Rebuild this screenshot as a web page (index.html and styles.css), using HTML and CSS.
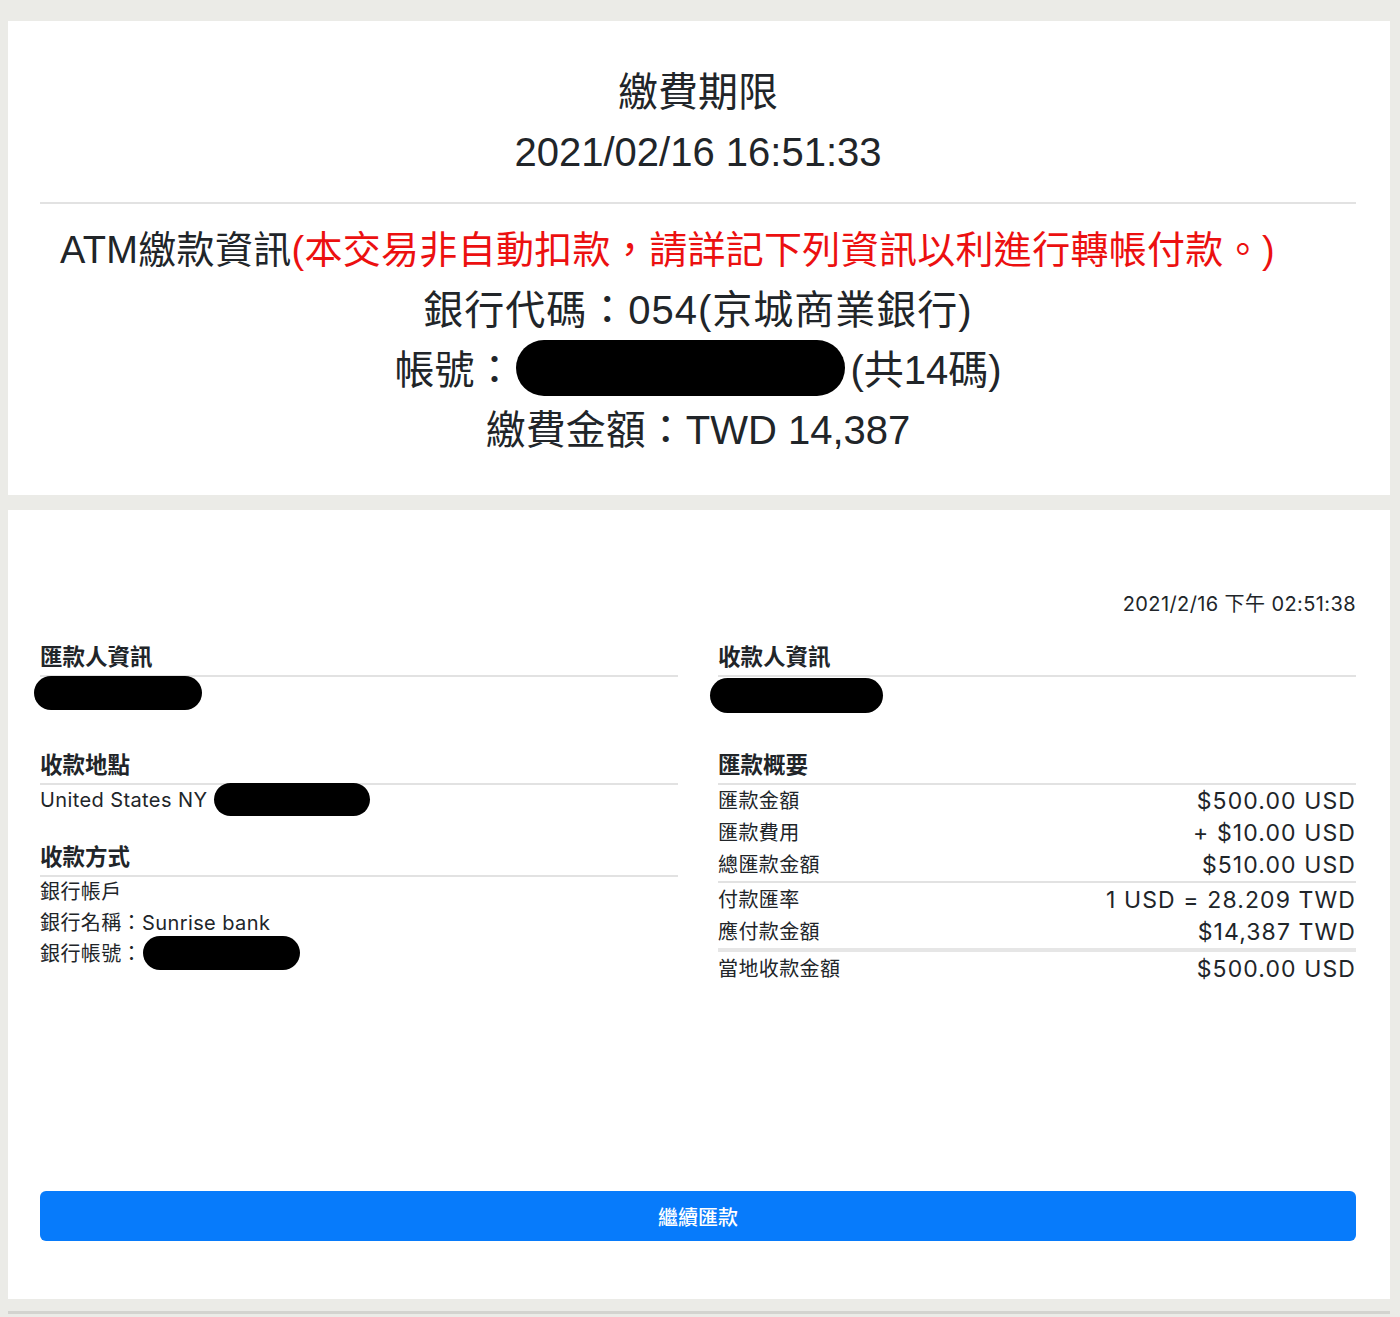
FILE: index.html
```html
<!DOCTYPE html>
<html lang="zh-Hant">
<head>
<meta charset="utf-8">
<title>繳費資訊</title>
<link rel="stylesheet" href="styles.css">
</head>
<body>
<div class="page">
  <section class="card card-top">
    <div class="line">繳費期限</div>
    <div class="line">2021/02/16 16:51:33</div>
    <hr class="divider">
    <div class="atm-title">ATM繳款資訊<span class="warn">(本交易非自動扣款，請詳記下列資訊以利進行轉帳付款。)</span></div>
    <div class="line line-wide">銀行代碼：054(京城商業銀行)</div>
    <div class="line line-flex">帳號：<span class="redact redact-lg"></span>(共14碼)</div>
    <div class="line">繳費金額：TWD 14,387</div>
  </section>

  <section class="card card-receipt">
    <div class="stamp">2021/2/16 下午 02:51:38</div>
    <div class="cols">
      <div class="col">
        <div class="sec">
          <h3 class="sec-title">匯款人資訊</h3>
          <div class="row row-redact"><span class="redact r-sender"></span></div>
        </div>
        <div class="sec sec-next">
          <h3 class="sec-title">收款地點</h3>
          <div class="row row-redact">United States NY<span class="redact r-place"></span></div>
        </div>
        <div class="sec sec-method">
          <h3 class="sec-title">收款方式</h3>
          <div class="row">銀行帳戶</div>
          <div class="row">銀行名稱：Sunrise bank</div>
          <div class="row row-redact">銀行帳號：<span class="redact r-acct"></span></div>
        </div>
      </div>
      <div class="col">
        <div class="sec">
          <h3 class="sec-title">收款人資訊</h3>
          <div class="row row-redact"><span class="redact r-recv"></span></div>
        </div>
        <div class="sec sec-next">
          <h3 class="sec-title">匯款概要</h3>
          <div class="kv"><span class="k">匯款金額</span><span class="v">$500.00 USD</span></div>
          <div class="kv"><span class="k">匯款費用</span><span class="v">+ $10.00 USD</span></div>
          <div class="kv"><span class="k">總匯款金額</span><span class="v">$510.00 USD</span></div>
          <div class="kv kv-sep"><span class="k">付款匯率</span><span class="v">1 USD = 28.209 TWD</span></div>
          <div class="kv"><span class="k">應付款金額</span><span class="v">$14,387 TWD</span></div>
          <div class="kv kv-sep-thick"><span class="k">當地收款金額</span><span class="v">$500.00 USD</span></div>
        </div>
      </div>
    </div>
    <button class="btn-primary" type="button">繼續匯款</button>
  </section>
  <div class="bottom-rule"></div>
</div>
</body>
</html>
```

FILE: styles.css
```css
* { box-sizing: border-box; }

html, body {
  margin: 0;
  padding: 0;
  background: #ebebe7;
}

body {
  font-family: "Liberation Sans", "Noto Sans CJK TC", sans-serif;
  color: #212529;
}

.page {
  width: 1400px;
  height: 1317px;
  padding-top: 21px;
  overflow: hidden;
}

.card {
  width: 1382px;
  margin-left: 8px;
  background: #ffffff;
}

/* ---------- top card ---------- */
.card-top {
  padding: 41px 34px 35px 32px;
  text-align: center;
}

.line {
  font-size: 40px;
  line-height: 60px;
  height: 60px;
  white-space: nowrap;
}

.line-wide { letter-spacing: 1px; }

.line-flex {
  display: flex;
  justify-content: center;
  align-items: center;
}

.divider {
  border: 0;
  height: 2px;
  background: #e2e2e2;
  margin: 20px 0 16px;
}

.atm-title {
  font-size: 38px;
  line-height: 60px;
  height: 60px;
  text-align: left;
  padding-left: 20px;
  letter-spacing: 0.3px;
  white-space: nowrap;
}

.warn { color: #ec1010; }

.redact {
  display: inline-block;
  background: #000;
  border-radius: 999px;
  flex: none;
}

.redact-lg {
  width: 329px;
  height: 56px;
  margin: -4px 5px 0 2px;
}

/* ---------- receipt card ---------- */
.card-receipt {
  margin-top: 15px;
  padding: 79px 34px 58px 32px;
  font-family: Inter, "Noto Sans CJK TC", sans-serif;
}

.stamp {
  text-align: right;
  font-size: 20px;
  line-height: 30px;
  letter-spacing: 0.4px;
}

.cols {
  margin-top: 21px;
  display: grid;
  grid-template-columns: 1fr 1fr;
  column-gap: 40px;
}

.sec-title {
  margin: 0;
  font-size: 22.5px;
  font-weight: 700;
  line-height: 30px;
  padding-bottom: 5px;
  border-bottom: 2px solid #e2e2e2;
  font-family: "Noto Sans CJK TC", sans-serif;
}

.sec-next { margin-top: 40px; }
.sec-method { margin-top: 24px; }

.row {
  font-size: 20px;
  line-height: 31px;
  height: 31px;
  letter-spacing: 0.4px;
  white-space: nowrap;
}

.row-redact {
  display: flex;
  align-items: center;
}

.r-sender { width: 168px; height: 34px; margin: -1px 0 -2px -6px; }
.r-recv { width: 173px; height: 35px; margin: 1px 0 -4px -8px; }
.r-place { width: 156px; height: 33px; margin: -4px 0 -2px 7px; }
.r-acct { width: 157px; height: 34px; margin: -6px 0 -2px 1px; }

.kv {
  display: flex;
  justify-content: space-between;
  align-items: center;
  height: 32px;
}

.kv-sep { border-top: 2px solid #e2e2e2; height: 35px; padding-top: 1px; }
.kv-sep-thick { border-top: 4px solid #e6e6e6; height: 37px; padding-top: 1px; }

.k {
  font-size: 20px;
  line-height: 32px;
  letter-spacing: 0.4px;
}

.v {
  font-size: 23px;
  line-height: 32px;
  letter-spacing: 1.1px;
}

.btn-primary {
  display: block;
  width: 100%;
  height: 50px;
  margin-top: 206px;
  border: 0;
  border-radius: 6px;
  background: #077bfb;
  color: #ffffff;
  font-family: "Noto Sans CJK TC", sans-serif;
  font-size: 20px;
  font-weight: 500;
  cursor: pointer;
}

.bottom-rule {
  width: 1382px;
  margin: 12px 0 0 8px;
  height: 3px;
  background: #d3d3cf;
}
```
